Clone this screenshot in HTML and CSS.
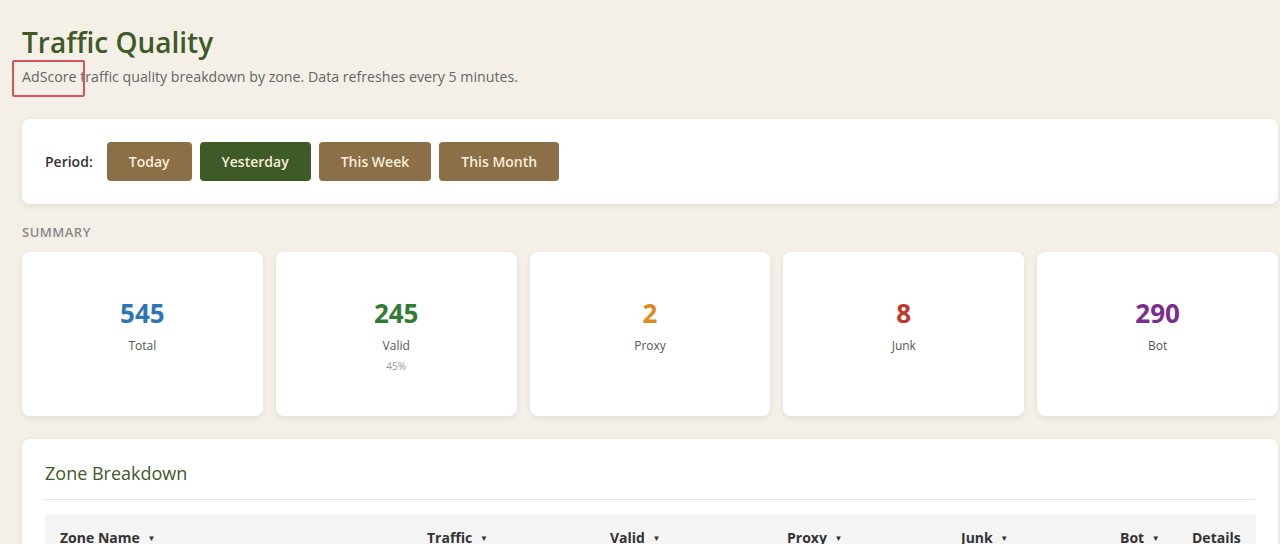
FILE: index.html
```html
<!DOCTYPE html>
<html lang="en">
<head>
    <meta charset="UTF-8">
    <meta name="viewport" content="width=device-width, initial-scale=1.0">
    <title>Traffic Quality</title>
    <link rel="stylesheet" href="styles.css">
</head>
<body>
    <div class="page">
        <h1>Traffic Quality</h1>
        <p class="subtitle"><span class="mark">AdScore</span> traffic quality breakdown by zone. Data refreshes every 5 minutes.</p>

        <div class="card period-bar">
            <span class="period-label">Period:</span>
            <a href="#" class="btn">Today</a>
            <a href="#" class="btn active">Yesterday</a>
            <a href="#" class="btn">This Week</a>
            <a href="#" class="btn">This Month</a>
        </div>

        <div class="section-label">Summary</div>
        <div class="summary">
            <div class="card stat">
                <div class="stat-value total">545</div>
                <div class="stat-label">Total</div>
            </div>
            <div class="card stat">
                <div class="stat-value valid">245</div>
                <div class="stat-label">Valid</div>
                <div class="stat-sub">45%</div>
            </div>
            <div class="card stat">
                <div class="stat-value proxy">2</div>
                <div class="stat-label">Proxy</div>
            </div>
            <div class="card stat">
                <div class="stat-value junk">8</div>
                <div class="stat-label">Junk</div>
            </div>
            <div class="card stat">
                <div class="stat-value bot">290</div>
                <div class="stat-label">Bot</div>
            </div>
        </div>

        <div class="card zones">
            <h2>Zone Breakdown</h2>
            <table>
                <colgroup>
                    <col class="c-name">
                    <col class="c-traffic">
                    <col class="c-valid">
                    <col class="c-proxy">
                    <col class="c-junk">
                    <col class="c-bot">
                    <col class="c-details">
                </colgroup>
                <thead>
                    <tr>
                        <th>Zone Name <span class="sort">&#9660;</span></th>
                        <th>Traffic <span class="sort">&#9660;</span></th>
                        <th>Valid <span class="sort">&#9660;</span></th>
                        <th>Proxy <span class="sort">&#9660;</span></th>
                        <th>Junk <span class="sort">&#9660;</span></th>
                        <th>Bot <span class="sort">&#9660;</span></th>
                        <th>Details</th>
                    </tr>
                </thead>
            </table>
        </div>
    </div>
</body>
</html>
```

FILE: styles.css
```css
body {
    font-family: 'Segoe UI', 'Open Sans', sans-serif;
    background-color: #f4f0e8;
    color: #333;
    margin: 0;
    padding: 0;
}
.page {
    width: 1256px;
    padding: 26px 0 0 22px;
}
h1 {
    color: #3d5a27;
    font-size: 28px;
    font-weight: 600;
    margin: 0;
    line-height: 32px;
}
.subtitle {
    color: #666;
    font-size: 14.2px;
    margin: 10px 0 0;
    line-height: 18px;
}
/* outlined word in the intro line */
.mark {
    position: relative;
}
.mark::after {
    content: '';
    position: absolute;
    left: -10px;
    right: -8px;
    top: -7px;
    bottom: -11px;
    border: 2px solid #d9545a;
    border-radius: 2px;
}
.card {
    background: #fff;
    border-radius: 8px;
    box-shadow: 0 2px 6px rgba(0, 0, 0, 0.08);
}
.period-bar {
    margin-top: 33px;
    height: 85px;
    box-sizing: border-box;
    padding: 0 23px;
    display: flex;
    align-items: center;
    gap: 8px;
}
.period-label {
    font-size: 14px;
    font-weight: 600;
    color: #333;
    margin-right: 6px;
}
.btn {
    display: inline-block;
    background: #8b6f47;
    color: #f7edd9;
    font-size: 14px;
    font-weight: 600;
    text-decoration: none;
    padding: 0 22px;
    line-height: 39px;
    border-radius: 4px;
}
.btn.active {
    background: #3d5a27;
}
.section-label {
    margin-top: 20px;
    font-size: 13px;
    font-weight: 600;
    color: #888;
    letter-spacing: 0.5px;
    text-transform: uppercase;
    line-height: 16px;
}
.summary {
    display: grid;
    grid-template-columns: repeat(5, 1fr);
    gap: 13px;
    margin-top: 12px;
}
.stat {
    height: 164px;
    box-sizing: border-box;
    padding-top: 46px;
    text-align: center;
}
.stat-value {
    font-size: 26px;
    font-weight: 700;
    line-height: 30px;
}
.stat-value.total { color: #2e75b6; }
.stat-value.valid { color: #2e7d32; }
.stat-value.proxy { color: #e08a1e; }
.stat-value.junk { color: #c0392b; }
.stat-value.bot { color: #7b2d8e; }
.stat-label {
    font-size: 12px;
    color: #555;
    margin-top: 9px;
}
.stat-sub {
    font-size: 10px;
    color: #999;
    margin-top: 5px;
}
.zones {
    margin-top: 23px;
    padding: 22px 23px 0;
}
.zones h2 {
    margin: 0;
    font-size: 18px;
    font-weight: 500;
    color: #3d5a27;
    line-height: 24px;
    padding-bottom: 14px;
    border-bottom: 1px solid #ece6da;
}
table {
    width: 100%;
    margin-top: 14px;
    border-collapse: collapse;
    table-layout: fixed;
}
.c-name { width: 367px; }
.c-traffic { width: 183px; }
.c-valid { width: 177px; }
.c-proxy { width: 174px; }
.c-junk { width: 159px; }
.c-bot { width: 72px; }
.c-details { width: 79px; }
th {
    background: #f5f5f5;
    text-align: left;
    font-size: 14px;
    font-weight: 700;
    color: #333;
    padding: 14px 15px;
    white-space: nowrap;
}
th .sort {
    font-size: 8px;
    margin-left: 4px;
    vertical-align: 2px;
}
```
